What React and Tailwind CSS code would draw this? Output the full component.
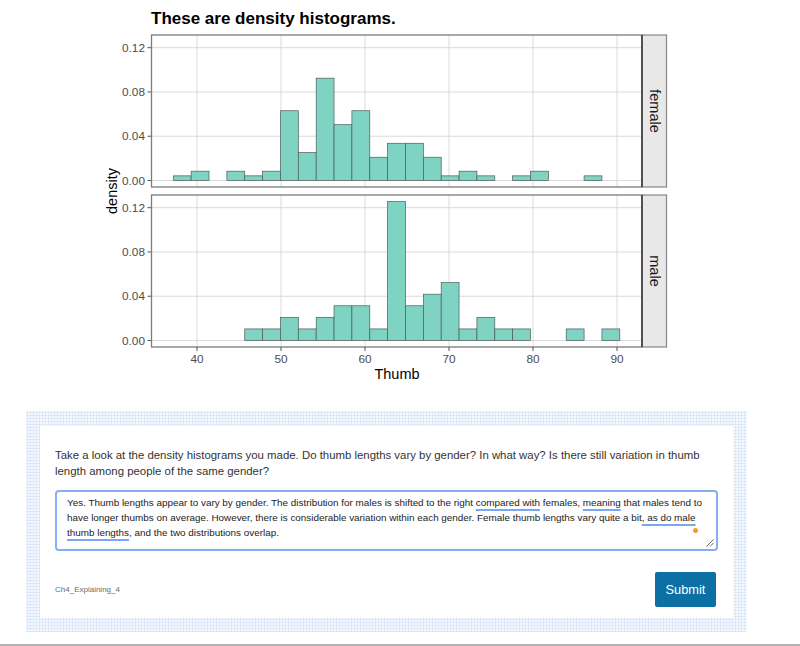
import React from 'react';

// counts per bin (25 bins, width 2.125, starting at 37.18)
const FEMALE = [1, 2, 0, 2, 1, 2, 15, 6, 22, 12, 15, 5, 8, 8, 5, 1, 2, 1, 0, 1, 2, 0, 0, 1, 0]
const MALE = [0, 0, 0, 0, 1, 1, 2, 1, 2, 3, 3, 1, 12, 3, 4, 5, 1, 2, 1, 1, 0, 0, 1, 0, 1]

const BIN_X0 = 173.3
const BIN_W = 17.86
const PX_PER_DENSITY = 1107
const X_TICKS = [40, 50, 60, 70, 80, 90]
const Y_TICKS = ['0.00', '0.04', '0.08', '0.12']
const FONT = "'Liberation Sans', Arial, sans-serif"

const xPos = (v) => 197 + (v - 40) * 8.4

const Panel = ({ top, bottom, y0, counts, label }) => {
  const n = counts.reduce((a, b) => a + b, 0)
  const perCount = PX_PER_DENSITY / (n * 2.125)
  const mid = (top + bottom) / 2

  return (
    <g>
      {/* panel background + grid */}
      <rect x={151.5} y={top} width={491} height={bottom - top} fill="#ffffff" />
      {X_TICKS.map((v) => (
        <line key={v} x1={xPos(v)} x2={xPos(v)} y1={top} y2={bottom} stroke="#dadada" strokeWidth={1} />
      ))}
      {Y_TICKS.map((t, i) => {
        const y = y0 - i * 0.04 * PX_PER_DENSITY
        return (
          <g key={t}>
            <line x1={151.5} x2={642} y1={y} y2={y} stroke="#dadada" strokeWidth={1} />
            <line x1={147.5} x2={151.5} y1={y} y2={y} stroke="#555" strokeWidth={1} />
            <text x={145} y={y + 4.2} textAnchor="end" fontSize={11.8} fill="#4d4d4d" fontFamily={FONT}>{t}</text>
          </g>
        )
      })}

      {/* bars */}
      {counts.map((c, i) => {
        const h = c * perCount
        return (
          <rect
            key={i}
            x={BIN_X0 + i * BIN_W}
            y={y0 - h}
            width={BIN_W}
            height={h}
            fill="#7ed3c3"
            stroke="#4d5c59"
            strokeWidth={0.7}
          />
        )
      })}

      {/* border */}
      <rect x={151.5} y={top} width={490.5} height={bottom - top} fill="none" stroke="#7c7c7c" strokeWidth={1.3} />

      {/* strip */}
      <rect x={642} y={top} width={24.5} height={bottom - top} fill="#e8e8e8" stroke="#868686" strokeWidth={1.2} />
      <line x1={642} x2={642} y1={top} y2={bottom} stroke="#3d3d3d" strokeWidth={1.6} />
      <text
        x={654.5}
        y={mid}
        transform={`rotate(90 654.5 ${mid})`}
        textAnchor="middle"
        dominantBaseline="central"
        fontSize={14.5}
        fill="#1a1a1a"
        fontFamily={FONT}
      >
        {label}
      </text>
    </g>
  )
}

const DensityChart = () => {
  return (
    <svg width="800" height="400" viewBox="0 0 800 400" className="block">
      <text x={151} y={24} fontSize={17} fontWeight="bold" fill="#000" fontFamily={FONT}>
        These are density histograms.
      </text>

      <Panel top={35} bottom={187} y0={180.5} counts={FEMALE} label="female" />
      <Panel top={195} bottom={347} y0={340.5} counts={MALE} label="male" />

      {/* x axis */}
      {X_TICKS.map((v) => (
        <g key={v}>
          <line x1={xPos(v)} x2={xPos(v)} y1={347} y2={351} stroke="#555" strokeWidth={1} />
          <text x={xPos(v)} y={362.5} textAnchor="middle" fontSize={11.8} fill="#4d4d4d" fontFamily={FONT}>{v}</text>
        </g>
      ))}
      <text x={397} y={378.5} textAnchor="middle" fontSize={14.5} fill="#000" fontFamily={FONT}>Thumb</text>

      <text
        x={112}
        y={191}
        transform="rotate(-90 112 191)"
        textAnchor="middle"
        dominantBaseline="central"
        fontSize={14.5}
        fill="#000"
        fontFamily={FONT}
      >
        density
      </text>
    </svg>
  )
}

const App = () => {
  const mark = 'underline decoration-[#7ba6f2] decoration-2 underline-offset-[3px]'

  return (
    <div className="w-[800px] h-[646px] bg-white overflow-hidden font-['Liberation_Sans',Arial,sans-serif]">
      {/* Plot */}
      <DensityChart />

      {/* Question Section */}
      <section className="mt-[11px] ml-[26px] w-[721px] bg-[#f5f8fd] bg-[radial-gradient(circle,#cfe0f4_0.9px,transparent_1.1px)] bg-[length:3px_3px] px-[14px] pt-[15px] pb-[14px]">
        <div className="bg-white h-[192px] px-[15px] pt-[21px] pb-[11px] flex flex-col">
          <p className="text-[11.4px] leading-[16px] text-[#333]">
            Take a look at the density histograms you made. Do thumb lengths vary by gender? In what way? Is there still variation in thumb length among people of the same gender?
          </p>

          {/* Answer box */}
          <div className="relative mt-[11px] h-[61px] border-2 border-[#86aef5] rounded-[4px] pl-[10px] pr-[4px] pt-[3px] text-[9.9px] leading-[15px] text-[#222]">
            Yes. Thumb lengths appear to vary by gender. The distribution for males is shifted to the right{' '}
            <span className={mark}>compared with</span> females, <span className={mark}>meaning</span> that males tend to have longer thumbs on average. However, there is considerable variation within each gender. Female thumb lengths vary quite a bit<span className={mark}>, as do male thumb lengths</span>, and the two distributions overlap.
            <span className="absolute top-[36px] right-[18px] w-[5px] h-[5px] rounded-full bg-[#f39b32]"></span>
            <svg className="absolute right-[2px] bottom-[2px]" width="8" height="8" viewBox="0 0 8 8">
              <line x1="7.5" y1="0.5" x2="0.5" y2="7.5" stroke="#6b6b6b" strokeWidth="1" />
              <line x1="7.5" y1="4" x2="4" y2="7.5" stroke="#6b6b6b" strokeWidth="1" />
            </svg>
          </div>

          {/* Footer row */}
          <div className="mt-[21px] flex items-center justify-between">
            <span className="text-[8px] text-[#6b6b6b]">Ch4_Explaining_4</span>
            <button className="mr-[2px] h-[35px] w-[61px] bg-[#0d70a5] text-white text-[12.8px] rounded-[2px]">
              Submit
            </button>
          </div>
        </div>
      </section>

      {/* bottom rule */}
      <div className="mt-[12px] h-[2px] bg-[#b3b3b3]"></div>
    </div>
  );
};

export default App;
